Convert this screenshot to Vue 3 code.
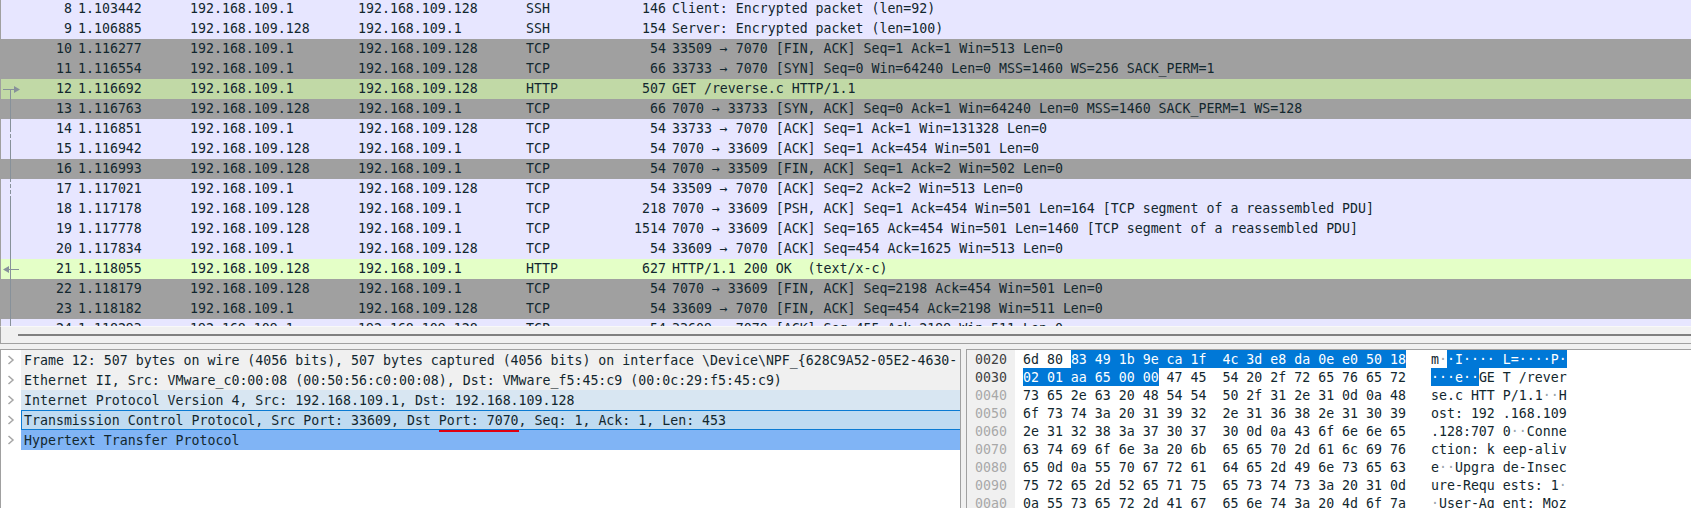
<script setup>
const rows = [
  ['8','1.103442','192.168.109.1','192.168.109.128','SSH','146','Client: Encrypted packet (len=92)','n'],
  ['9','1.106885','192.168.109.128','192.168.109.1','SSH','154','Server: Encrypted packet (len=100)','n'],
  ['10','1.116277','192.168.109.1','192.168.109.128','TCP','54','33509 → 7070 [FIN, ACK] Seq=1 Ack=1 Win=513 Len=0','g'],
  ['11','1.116554','192.168.109.1','192.168.109.128','TCP','66','33733 → 7070 [SYN] Seq=0 Win=64240 Len=0 MSS=1460 WS=256 SACK_PERM=1','g'],
  ['12','1.116692','192.168.109.1','192.168.109.128','HTTP','507','GET /reverse.c HTTP/1.1','s'],
  ['13','1.116763','192.168.109.128','192.168.109.1','TCP','66','7070 → 33733 [SYN, ACK] Seq=0 Ack=1 Win=64240 Len=0 MSS=1460 SACK_PERM=1 WS=128','g'],
  ['14','1.116851','192.168.109.1','192.168.109.128','TCP','54','33733 → 7070 [ACK] Seq=1 Ack=1 Win=131328 Len=0','n'],
  ['15','1.116942','192.168.109.128','192.168.109.1','TCP','54','7070 → 33609 [ACK] Seq=1 Ack=454 Win=501 Len=0','n'],
  ['16','1.116993','192.168.109.128','192.168.109.1','TCP','54','7070 → 33509 [FIN, ACK] Seq=1 Ack=2 Win=502 Len=0','g'],
  ['17','1.117021','192.168.109.1','192.168.109.128','TCP','54','33509 → 7070 [ACK] Seq=2 Ack=2 Win=513 Len=0','n'],
  ['18','1.117178','192.168.109.128','192.168.109.1','TCP','218','7070 → 33609 [PSH, ACK] Seq=1 Ack=454 Win=501 Len=164 [TCP segment of a reassembled PDU]','n'],
  ['19','1.117778','192.168.109.128','192.168.109.1','TCP','1514','7070 → 33609 [ACK] Seq=165 Ack=454 Win=501 Len=1460 [TCP segment of a reassembled PDU]','n'],
  ['20','1.117834','192.168.109.1','192.168.109.128','TCP','54','33609 → 7070 [ACK] Seq=454 Ack=1625 Win=513 Len=0','n'],
  ['21','1.118055','192.168.109.128','192.168.109.1','HTTP','627','HTTP/1.1 200 OK  (text/x-c)','h'],
  ['22','1.118179','192.168.109.128','192.168.109.1','TCP','54','7070 → 33609 [FIN, ACK] Seq=2198 Ack=454 Win=501 Len=0','g'],
  ['23','1.118182','192.168.109.1','192.168.109.128','TCP','54','33609 → 7070 [FIN, ACK] Seq=454 Ack=2198 Win=511 Len=0','g'],
  ['24','1.118293','192.168.109.1','192.168.109.128','TCP','54','33609 → 7070 [ACK] Seq=455 Ack=2199 Win=511 Len=0','n']
]

const tree = [
  { text: 'Frame 12: 507 bytes on wire (4056 bits), 507 bytes captured (4056 bits) on interface \\Device\\NPF_{628C9A52-05E2-4630-', cls: 'plain' },
  { text: 'Ethernet II, Src: VMware_c0:00:08 (00:50:56:c0:00:08), Dst: VMware_f5:45:c9 (00:0c:29:f5:45:c9)', cls: 'plain' },
  { text: 'Internet Protocol Version 4, Src: 192.168.109.1, Dst: 192.168.109.128', cls: 'ip' },
  { text: 'Transmission Control Protocol, Src Port: 33609, Dst Port: 7070, Seq: 1, Ack: 1, Len: 453', cls: 'tcp', mark: true },
  { text: 'Hypertext Transfer Protocol', cls: 'http' }
]

const hexData = [
  ['0020','6d 80 83 49 1b 9e ca 1f 4c 3d e8 da 0e e0 50 18', 2, 16, true],
  ['0030','02 01 aa 65 00 00 47 45 54 20 2f 72 65 76 65 72', 0, 6, true],
  ['0040','73 65 2e 63 20 48 54 54 50 2f 31 2e 31 0d 0a 48', 0, 0, false],
  ['0050','6f 73 74 3a 20 31 39 32 2e 31 36 38 2e 31 30 39', 0, 0, false],
  ['0060','2e 31 32 38 3a 37 30 37 30 0d 0a 43 6f 6e 6e 65', 0, 0, false],
  ['0070','63 74 69 6f 6e 3a 20 6b 65 65 70 2d 61 6c 69 76', 0, 0, false],
  ['0080','65 0d 0a 55 70 67 72 61 64 65 2d 49 6e 73 65 63', 0, 0, false],
  ['0090','75 72 65 2d 52 65 71 75 65 73 74 73 3a 20 31 0d', 0, 0, false],
  ['00a0','0a 55 73 65 72 2d 41 67 65 6e 74 3a 20 4d 6f 7a', 0, 0, false]
]

function groupBytes(list) {
  return list.slice(0, 8).join(' ') + '  ' + list.slice(8).join(' ')
}

function hexSegments(bytes, from, to) {
  const all = groupBytes(bytes)
  if (from === to) return [{ t: all, sel: false }]
  const pos = (i) => (i === 0 ? 0 : i * 3 + (i > 8 ? 1 : 0))
  const a = pos(from)
  const b = to >= 16 ? all.length : pos(to) - 1
  return [
    { t: all.slice(0, a), sel: false },
    { t: all.slice(a, b), sel: true },
    { t: all.slice(b), sel: false }
  ].filter((s) => s.t)
}

function asciiSegments(bytes, from, to) {
  const out = []
  const push = (t, sel, dim) => {
    const last = out[out.length - 1]
    if (last && last.sel === sel && last.dim === dim) last.t += t
    else out.push({ t, sel, dim })
  }
  bytes.forEach((b, i) => {
    const code = parseInt(b, 16)
    const printable = code >= 32 && code < 127
    const sel = i >= from && i < to
    if (i === 8) push(' ', from < 8 && to > 8, false)
    push(printable ? String.fromCharCode(code) : '·', sel, !printable)
  })
  return out
}

const hexLines = hexData.map(([offset, text, from, to, strong]) => {
  const bytes = text.split(' ')
  return {
    offset,
    strong,
    hex: hexSegments(bytes, from, to),
    ascii: asciiSegments(bytes, from, to)
  }
})

const markBefore = 'Transmission Control Protocol, Src Port: 33609, Dst '
const markText = 'Port: 7070'
const markAfter = ', Seq: 1, Ack: 1, Len: 453'
</script>

<template>
  <div class="app">
    <section class="list">
      <div v-for="r in rows" :key="r[0]" class="row" :class="'c-' + r[7]">
        <span class="no">{{ r[0] }}</span>
        <span class="cell">{{ r[1] }}</span>
        <span class="cell">{{ r[2] }}</span>
        <span class="cell">{{ r[3] }}</span>
        <span class="cell">{{ r[4] }}</span>
        <span class="len">{{ r[5] }}</span>
        <span class="info">{{ r[6] }}</span>
      </div>
      <svg class="rel" width="24" height="327" viewBox="0 0 24 327">
        <g stroke="#87919a" fill="none" stroke-width="1">
          <path d="M3 89.5H15" />
          <path d="M10.5 89V128" />
          <path d="M10.5 128V140" stroke-dasharray="4 2" />
          <path d="M10.5 140V178" />
          <path d="M10.5 178V196" stroke-dasharray="4 2" />
          <path d="M10.5 196V327" />
          <path d="M8 269.5H19" />
        </g>
        <path d="M14 86L20 89.5L14 93Z" fill="#87919a" />
        <path d="M9 266L3 269.5L9 273Z" fill="#87919a" />
      </svg>
    </section>

    <div class="splitter"><div class="grip"></div></div>

    <section class="panes">
      <div class="tree">
        <div v-for="t in tree" :key="t.text" class="node">
          <svg class="chev" width="9" height="12" viewBox="0 0 9 12">
            <path d="M1.5 2L6 6L1.5 10" fill="none" stroke="#a6a6a6" stroke-width="1.5" />
          </svg>
          <div class="label" :class="t.cls">
            <template v-if="t.mark">{{ markBefore }}<span class="mark">{{ markText }}</span>{{ markAfter }}</template>
            <template v-else>{{ t.text }}</template>
          </div>
        </div>
      </div>

      <div class="bytes">
        <div class="offsets">
          <div v-for="l in hexLines" :key="l.offset" class="line" :class="{ dim: !l.strong }">{{ l.offset }}</div>
        </div>
        <div class="hexcol">
          <div v-for="l in hexLines" :key="l.offset" class="line">
            <span v-for="(s, i) in l.hex" :key="i" :class="{ sel: s.sel }">{{ s.t }}</span>
          </div>
        </div>
        <div class="asciicol">
          <div v-for="l in hexLines" :key="l.offset" class="line">
            <span v-for="(s, i) in l.ascii" :key="i" :class="{ sel: s.sel, np: s.dim && !s.sel }">{{ s.t }}</span>
          </div>
        </div>
      </div>
    </section>
  </div>
</template>

<style>
html, body { margin: 0; background: #f0f0f0; }
</style>

<style scoped>
.app {
  width: 1691px;
  height: 508px;
  overflow: hidden;
  display: flex;
  flex-direction: column;
  background: #f0f0f0;
  color: #12272e;
  font-family: "DejaVu Sans Mono", monospace;
  font-size: 13.25px;
  white-space: pre;
}
.list {
  position: relative;
  height: 326px;
  flex: none;
  overflow: hidden;
  border-left: 1px solid #a0a0a0;
  box-sizing: border-box;
  background: #fff;
}
.row {
  display: grid;
  grid-template-columns: 71px 112px 168px 168px 90px 56px 1fr;
  height: 20px;
  line-height: 20px;
}
.row:first-child { margin-top: -1px; }
.c-n { background: #e7e6ff; }
.c-g { background: #a0a0a0; }
.c-s { background: #c1d9a6; }
.c-h { background: #e4ffc7; }
.no { text-align: right; }
.cell { padding-left: 6px; }
.len { text-align: right; }
.info { padding-left: 6px; }
.rel { position: absolute; left: -1px; top: 0; }
.splitter {
  height: 18px;
  flex: none;
  box-sizing: border-box;
  border-top: 1px solid #f8f8f8;
  border-bottom: 1px solid #a0a0a0;
  border-left: 1px solid #a0a0a0;
  padding: 7px 0 0 17px;
}
.grip { height: 2px; background: #808080; }
.panes {
  flex: 1;
  min-height: 0;
  display: flex;
  gap: 5px;
  padding-top: 5px;
}
.tree {
  width: 961px;
  flex: none;
  box-sizing: border-box;
  border: 1px solid #a0a0a0;
  border-bottom: none;
  background: #fff;
}
.node {
  display: flex;
  align-items: center;
  height: 20px;
}
.chev { margin-left: 6px; margin-right: 5px; flex: none; }
.label {
  flex: 1;
  min-width: 0;
  height: 20px;
  line-height: 22px;
  padding-left: 3px;
  box-sizing: border-box;
  overflow: hidden;
}
.plain { background: #f0f0f0; }
.ip { background: #d8e6f2; }
.tcp {
  background: #bfdbf1;
  line-height: 20px;
  border: 1px solid #0a7bd3;
  border-right: none;
  padding-left: 2px;
  overflow: visible;
}
.http { background: #80b4f5; }
.mark { position: relative; }
.mark::after {
  content: "";
  position: absolute;
  left: 0;
  right: 0;
  top: calc(100% + 2px);
  height: 2px;
  background: #e00010;
}
.bytes {
  flex: 1;
  min-width: 0;
  display: flex;
  box-sizing: border-box;
  border-top: 1px solid #a0a0a0;
  border-left: 1px solid #a0a0a0;
  background: #fff;
  overflow: hidden;
}
.line { height: 18px; line-height: 20px; }
.offsets {
  width: 48px;
  flex: none;
  padding-left: 8px;
  box-sizing: border-box;
  background: #f0f0f0;
  color: #404040;
}
.offsets .dim { color: #a8a8a8; }
.hexcol { margin-left: 8px; width: 384px; flex: none; }
.asciicol { margin-left: 24px; }
.sel { background: #0078d7; color: #fff; display: inline-block; height: 18px; }
.np { color: #9aa5ad; }
</style>
